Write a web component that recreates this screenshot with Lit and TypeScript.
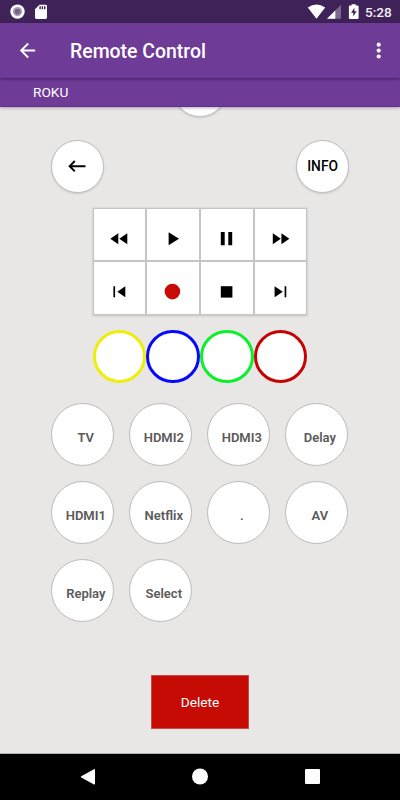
import { LitElement, html, css, svg } from "lit";
import { customElement } from "lit/decorators.js";

const transport = [
  { name: "Rewind", icon: svg`<path d="M25.3 25.2v11l-8-5.5zM34.3 25.2v11l-8-5.5z"/>` },
  { name: "Play", icon: svg`<path d="M22.6 24.2v13l10.4-6.5z"/>` },
  { name: "Pause", icon: svg`<path d="M20.8 24h3.9v13.3h-3.9zM28.3 24h3.9v13.3h-3.9z"/>` },
  { name: "Forward", icon: svg`<path d="M18.8 25.2v11l8-5.5zM27.4 25.2v11l8-5.5z"/>` },
  { name: "Previous", icon: svg`<path d="M20.4 25.2h1.7v11h-1.7zM32.3 25.2v11l-8-5.5z"/>` },
  { name: "Record", icon: svg`<circle cx="26.4" cy="30.6" r="7.8" fill="#c60c04"/>` },
  { name: "Stop", icon: svg`<path d="M20.8 25.2h11.6v11.4h-11.6z"/>` },
  { name: "Next", icon: svg`<path d="M20.6 25.2v11l8.2-5.5zM30.6 25.2h1.7v11h-1.7z"/>` },
];

const colors = ["yellow", "blue", "green", "red"];
const extras = ["TV", "HDMI2", "HDMI3", "Delay", "HDMI1", "Netflix", ".", "AV", "Replay", "Select"];

@customElement("app-root")
export class AppRoot extends LitElement {
  static styles = css`
    :host {
      display: flex;
      flex-direction: column;
      width: 400px;
      height: 800px;
      overflow: hidden;
      background: #e8e7e5;
      font-family: Roboto, sans-serif;
      color: #000;
    }
    * { box-sizing: border-box; }
    svg { display: block; flex: none; }
    .status {
      height: 23px;
      flex: none;
      display: flex;
      justify-content: space-between;
      background: #3f2358;
      color: #fff;
    }
    .status-end { display: flex; }
    .clock {
      width: 35px;
      font-size: 13.6px;
      font-weight: 500;
      line-height: 24px;
      color: #f3f0f5;
    }
    .bar {
      height: 55px;
      flex: none;
      display: flex;
      align-items: center;
      padding: 0 10px 0 16px;
      background: #6e3b96;
      color: #fff;
      position: relative;
      z-index: 2;
      box-shadow: 0 1px 3px rgba(30, 0, 60, 0.5);
    }
    .title {
      flex: 1;
      margin-left: 31px;
      font-size: 19.45px;
      font-weight: 500;
      line-height: 24px;
      padding-top: 2px;
    }
    .tab {
      height: 29px;
      flex: none;
      padding-left: 33px;
      background: #6e3b96;
      border-bottom: 1px solid #662c93;
      color: #fff;
      font-size: 13.7px;
      line-height: 29px;
      position: relative;
      z-index: 1;
      box-shadow: 0 1px 3px rgba(0, 0, 0, 0.3);
    }
    .content {
      flex: 1;
      min-height: 0;
      overflow: hidden;
      display: flex;
      flex-direction: column;
      align-items: center;
      border-bottom: 1px solid #b4b4b2;
    }
    .round {
      width: 53.4px;
      height: 53.4px;
      flex: none;
      border-radius: 50%;
      background: #fff;
      border: 1px solid #bdbdbd;
      box-shadow: 0 1px 2px rgba(0, 0, 0, 0.12);
      display: flex;
      align-items: center;
      justify-content: center;
      font-size: 13.8px;
      font-weight: 500;
    }
    .hidden-half { margin-top: -43.6px; }
    .pair {
      width: 298.6px;
      margin-top: 22.8px;
      display: flex;
      justify-content: space-between;
    }
    .transport {
      margin-top: 15px;
      width: 214px;
      height: 107px;
      flex: none;
      display: grid;
      grid-template-columns: 51px 52px 52px 51px;
      grid-template-rows: 51px 52px;
      gap: 2px;
      padding: 1px;
      background: #c5c5c5;
      box-shadow: 0 0 0 0.5px #cfcfcf, 0 1px 2px rgba(0, 0, 0, 0.2);
    }
    .key {
      background: #fff;
      overflow: hidden;
    }
    .key svg { margin: -0.5px 0 0 -0.8px; }
    .colors {
      margin-top: 14.7px;
      display: flex;
      gap: 0.3px;
    }
    .color {
      width: 53.4px;
      height: 53.4px;
      border-radius: 50%;
      background: #fff;
      border: 3px solid;
    }
    .yellow { border-color: #eeee0c; }
    .blue { border-color: #0808fb; }
    .green { border-color: #0cf02c; }
    .red { border-color: #c40404; }
    .extras {
      margin-top: 20.3px;
      width: 297.4px;
      display: grid;
      grid-template-columns: repeat(4, 63px);
      column-gap: 15px;
      row-gap: 15px;
    }
    .extra {
      width: 63px;
      height: 63px;
      border-radius: 50%;
      background: #fff;
      border: 1px solid #bababa;
      display: flex;
      align-items: center;
      justify-content: center;
      padding: 6px 0 0 6px;
      font-size: 13px;
      font-weight: 600;
      line-height: 16px;
      color: #5a5a5a;
      white-space: nowrap;
    }
    .delete {
      margin-top: 53px;
      width: 97.5px;
      height: 54px;
      flex: none;
      display: flex;
      align-items: center;
      justify-content: center;
      background: #c60b04;
      border: 1px solid #cb4a45;
      color: #fff;
      font-size: 13.7px;
    }
    .nav {
      height: 46px;
      flex: none;
      background: #000;
    }
  `;

  render() {
    return html`
      <div class="status">
        <svg width="60" height="23" viewBox="0 0 60 23">
          <circle cx="17.5" cy="11.6" r="7.2" fill="#fff"/>
          <circle cx="17.5" cy="11.6" r="4.6" fill="#a99bb7"/>
          <circle cx="17.5" cy="11.6" r="2.8" fill="#76628b"/>
          <path d="M39.5 4.8h6.1q1.4 0 1.4 1.4v11.3q0 1.4-1.4 1.4h-9.2q-1.4 0-1.4-1.4V9.3z" fill="#fff"/>
          <path d="M39.4 6.2h1.4v3h-1.4zM41.7 6.2h1.4v3h-1.4zM44 6.2h1.4v3H44z" fill="#3f2358"/>
        </svg>
        <div class="status-end">
          <svg width="65" height="23" viewBox="300 0 65 23">
            <path d="M307.8 7.6q8.7-6 17.4 0l-8.7 11.2z" fill="#fff"/>
            <path d="M341 4.8v14h-14z" fill="#7c6790"/>
            <path d="M335.3 10.5v8.3H327z" fill="#fff"/>
            <path d="M351.6 5.6V4.3h4.2v1.3h1.8q1 0 1 1v11.3q0 1-1 1h-7.7q-1 0-1-1V6.6q0-1 1-1z" fill="#fff"/>
            <path d="M354.4 7.7l-3.3 5h2.1v3.8l3.4-5.2h-2.2z" fill="#3f2358"/>
          </svg>
          <div class="clock">5:28</div>
        </div>
      </div>
      <div class="bar">
        <svg width="23" height="23" viewBox="0 0 24 24" fill="#fff"><path d="M20 11H7.83l5.59-5.59L12 4l-8 8 8 8 1.41-1.41L7.83 13H20z"/></svg>
        <div class="title">Remote Control</div>
        <svg width="23" height="23" viewBox="0 0 23 23" fill="#fff"><circle cx="11.7" cy="5.7" r="2.1"/><circle cx="11.7" cy="11.6" r="2.1"/><circle cx="11.7" cy="17.5" r="2.1"/></svg>
      </div>
      <div class="tab">ROKU</div>
      <div class="content">
        <div class="round hidden-half"></div>
        <div class="pair">
          <div class="round">
            <svg width="18" height="13" viewBox="0 0 18 13" fill="none" stroke="#000" stroke-width="2"><path d="M17.5 6.2H2M6.8 1L1.7 6.2l5.1 5.2"/></svg>
          </div>
          <div class="round">INFO</div>
        </div>
        <div class="transport">
          ${transport.map((k) => html`<div class="key" aria-label=${k.name}><svg width="53.5" height="53.5" viewBox="0 0 53.5 53.5">${k.icon}</svg></div>`)}
        </div>
        <div class="colors">${colors.map((c) => html`<div class="color ${c}"></div>`)}</div>
        <div class="extras">${extras.map((t) => html`<div class="extra">${t}</div>`)}</div>
        <div class="delete">Delete</div>
      </div>
      <div class="nav">
        <svg width="400" height="46" viewBox="0 754 400 46" fill="#fff">
          <path d="M94 769.2q1-.4 1 .7v13.8q0 1.1-1 .7l-12.8-7q-.8-.6 0-1.2z"/>
          <circle cx="200" cy="776.5" r="8"/>
          <rect x="305" y="769" width="15" height="15" rx="1"/>
        </svg>
      </div>
    `;
  }
}
